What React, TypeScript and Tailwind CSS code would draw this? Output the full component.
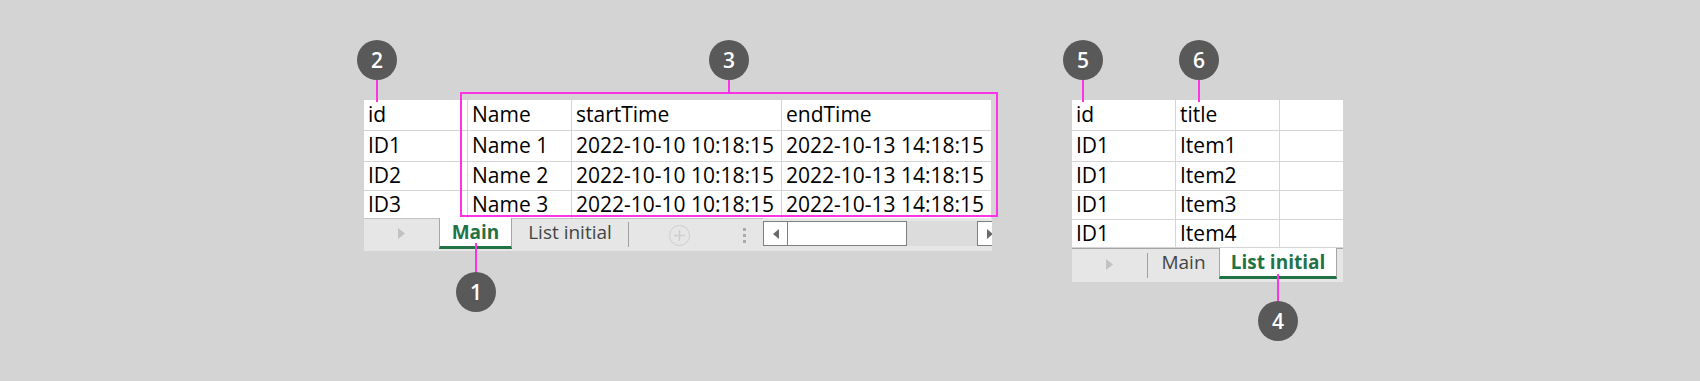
import React from "react";

function Badge({ n, className }: { n: string; className: string }) {
  return (
    <div
      className={`absolute flex h-[40px] w-[40px] items-center justify-center rounded-full bg-[#595959] text-[21px] font-semibold leading-none text-white ${className}`}
    >
      {n}
    </div>
  );
}

function Line({ className }: { className: string }) {
  return <div className={`absolute w-[2px] bg-[#ff33e6] ${className}`} />;
}

function TriRight({ color }: { color: string }) {
  return (
    <svg width="7" height="11" viewBox="0 0 7 11">
      <path d="M0 0 L7 5.5 L0 11 Z" fill={color} />
    </svg>
  );
}

function TriLeft({ color }: { color: string }) {
  return (
    <svg width="6" height="10" viewBox="0 0 6 10">
      <path d="M6 0 L0 5 L6 10 Z" fill={color} />
    </svg>
  );
}

const sheet1 = [
  ["id", "Name", "startTime", "endTime"],
  ["ID1", "Name 1", "2022-10-10 10:18:15", "2022-10-13 14:18:15"],
  ["ID2", "Name 2", "2022-10-10 10:18:15", "2022-10-13 14:18:15"],
  ["ID3", "Name 3", "2022-10-10 10:18:15", "2022-10-13 14:18:15"],
];

const sheet2 = [
  ["id", "title", ""],
  ["ID1", "Item1", ""],
  ["ID1", "Item2", ""],
  ["ID1", "Item3", ""],
  ["ID1", "Item4", ""],
];

const rowH = ["h-[31px]", "h-[31px]", "h-[29px]", "h-[29px]", "h-[28px]"];

function Cell({ text, h, last }: { text: string; h: string; last?: boolean }) {
  return (
    <div
      className={`flex items-center overflow-hidden whitespace-nowrap border-b border-[#d4d4d4] pl-[4px] text-[21px] text-black ${h} ${
        last ? "" : "border-r"
      }`}
    >
      {text}
    </div>
  );
}

export default function App() {
  return (
    <div className="h-[381px] w-[1700px] overflow-hidden bg-[#d4d4d4] font-['Open_Sans',sans-serif]">
      <div className="flex items-start gap-[80px] pl-[364px] pt-[100px]">
        {/* Sheet 1 */}
        <div className="relative w-[628px]">
          <div className="grid h-[118px] grid-cols-[104px_104px_210px_210px] content-start overflow-hidden bg-white">
            {sheet1.map((row, r) =>
              row.map((c, i) => <Cell key={`${r}-${i}`} text={c} h={rowH[r]} />)
            )}
          </div>
          <div className="flex h-[33px] items-start overflow-hidden bg-[#e6e6e6]">
            <div className="flex h-[31px] w-[75px] shrink-0 items-center justify-center border-t border-[#c4c4c4] pb-[2px]">
              <TriRight color="#c2c2c2" />
            </div>
            <div className="flex h-[31px] w-[73px] shrink-0 items-center justify-center border-x border-b-[3px] border-x-[#a6a6a6] border-b-[#217346] bg-white text-[19px] font-bold text-[#217346]">
              Main
            </div>
            <div className="flex h-[31px] w-[116px] shrink-0 items-center justify-center border-t border-[#c4c4c4] pb-[3px] text-[19px] text-[#444444]">
              List initial
            </div>
            <div className="h-[31px] w-px shrink-0 border-t border-[#c4c4c4]">
              <div className="mt-[3px] h-[25px] w-px bg-[#a0a0a0]" />
            </div>
            <div className="flex h-[31px] w-[134px] shrink-0 items-start border-t border-[#c4c4c4]">
              <div className="ml-[40px] mt-[6px] flex h-[21px] w-[21px] shrink-0 items-center justify-center rounded-full border-[1.5px] border-[#cdcdcd]">
                <svg width="11" height="11" viewBox="0 0 11 11">
                  <path d="M5.5 0 V11 M0 5.5 H11" stroke="#cdcdcd" strokeWidth="1.5" />
                </svg>
              </div>
              <div className="ml-[53px] mt-[9px] flex shrink-0 flex-col gap-[3px]">
                <div className="h-[3px] w-[3px] bg-[#ababab]" />
                <div className="h-[3px] w-[3px] bg-[#ababab]" />
                <div className="h-[3px] w-[3px] bg-[#ababab]" />
              </div>
            </div>
            <div className="mt-[3px] flex h-[25px] shrink-0 items-stretch">
              <div className="flex w-[144px] border border-[#7f7f7f] bg-white">
                <div className="flex w-[24px] items-center justify-center border-r border-[#7f7f7f]">
                  <TriLeft color="#6a6a6a" />
                </div>
                <div className="flex-1" />
              </div>
              <div className="w-[70px] bg-[#dcdcdc]" />
              <div className="flex w-[25px] items-center justify-center border border-[#7f7f7f] bg-white">
                <svg width="6" height="10" viewBox="0 0 6 10">
                  <path d="M0 0 L6 5 L0 10 Z" fill="#6a6a6a" />
                </svg>
              </div>
            </div>
          </div>

          {/* annotations */}
          <div className="absolute left-[96px] top-[-8px] h-[125px] w-[538px] border-2 border-[#ff33e6]" />
          <Line className="left-[12px] top-[-20px] h-[22px]" />
          <Badge n="2" className="left-[-7px] top-[-60px]" />
          <Line className="left-[364px] top-[-20px] h-[13px]" />
          <Badge n="3" className="left-[345px] top-[-60px]" />
          <Line className="left-[111px] top-[143px] h-[30px]" />
          <Badge n="1" className="left-[92px] top-[172px]" />
        </div>

        {/* Sheet 2 */}
        <div className="relative w-[271px]">
          <div className="grid h-[148px] grid-cols-[104px_104px_63px] content-start overflow-hidden bg-white">
            {sheet2.map((row, r) =>
              row.map((c, i) => (
                <Cell key={`${r}-${i}`} text={c} h={rowH[r]} last={i === 2} />
              ))
            )}
          </div>
          <div className="flex h-[34px] items-start overflow-hidden bg-[#e6e6e6]">
            <div className="flex h-[31px] w-[75px] shrink-0 items-center justify-center border-t border-[#a6a6a6]">
              <TriRight color="#c2c2c2" />
            </div>
            <div className="h-[31px] w-px shrink-0 border-t border-[#a6a6a6]">
              <div className="mt-[4px] h-[25px] w-px bg-[#a0a0a0]" />
            </div>
            <div className="flex h-[31px] w-[71px] shrink-0 items-center justify-center border-t border-[#a6a6a6] pb-[3px] text-[19px] text-[#444444]">
              Main
            </div>
            <div className="flex h-[31px] w-[118px] shrink-0 items-center justify-center border-x border-b-[3px] border-x-[#a6a6a6] border-b-[#217346] bg-white text-[19px] font-bold text-[#217346]">
              List initial
            </div>
            <div className="h-[31px] flex-1 border-t border-[#a6a6a6]" />
          </div>

          {/* annotations */}
          <Line className="left-[10px] top-[-20px] h-[22px]" />
          <Badge n="5" className="left-[-9px] top-[-60px]" />
          <Line className="left-[126px] top-[-20px] h-[22px]" />
          <Badge n="6" className="left-[107px] top-[-60px]" />
          <Line className="left-[205px] top-[174px] h-[28px]" />
          <Badge n="4" className="left-[186px] top-[201px]" />
        </div>
      </div>
    </div>
  );
}
